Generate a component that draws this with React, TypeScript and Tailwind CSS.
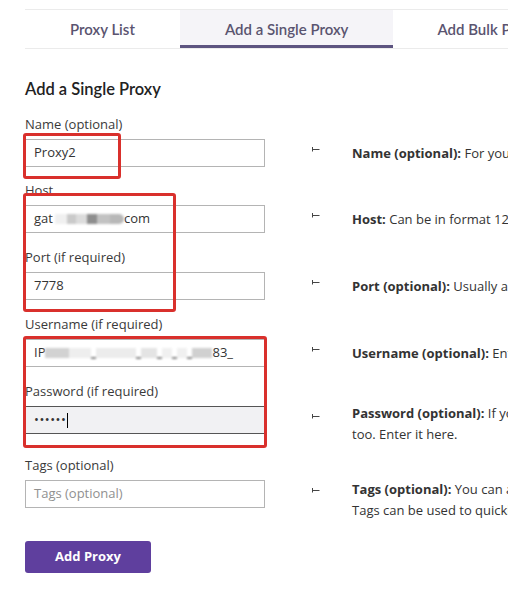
import React from "react";

const Arrow = () => (
  <svg width="9" height="6" viewBox="0 0 9 6" className="mb-[8px] shrink-0 text-[#444]">
    <path d="M1 3.5H8.5" stroke="currentColor" strokeWidth="1" fill="none" />
    <path d="M1.5 1L1.5 5.5" stroke="currentColor" strokeWidth="1" fill="none" />
  </svg>
);

function Help({ children, shift }: { children: React.ReactNode; shift?: "pw" | "tags" }) {
  const cls =
    shift === "pw" ? "translate-y-[4px]" : shift === "tags" ? "translate-y-[6px]" : "";
  return (
    <div className="ml-[46px] mt-[24px] flex h-[28px] items-center">
      <div className="w-[8px]">
        <Arrow />
      </div>
      <div className={"ml-[33px] whitespace-nowrap text-[13px] leading-[21px] text-[#333] " + cls}>
        {children}
      </div>
    </div>
  );
}

function Field({
  label,
  input,
  help,
  className,
}: {
  label: string;
  input: React.ReactNode;
  help: React.ReactNode;
  className?: string;
}) {
  return (
    <div className={"flex " + (className ?? "")}>
      <div className="flex w-[240px] shrink-0 flex-col">
        <div className="h-[18px] text-[13px] leading-[18px] text-[#3a3a3a]">{label}</div>
        <div className="mt-[6px]">{input}</div>
      </div>
      {help}
    </div>
  );
}

const baseInput =
  "flex h-[28px] w-[240px] items-center overflow-hidden whitespace-nowrap border border-[#b4b4b4] bg-white px-[8px] text-[13px] text-[#333]";

export default function App() {
  return (
    <div className="relative h-[596px] w-[508px] overflow-hidden bg-white font-['Open_Sans',sans-serif]">
      {/* Tabs */}
      <div className="ml-[25px] mt-[9px] flex h-[40px] w-[600px] border-y border-[#ebebeb] font-['Lato',sans-serif] text-[15px] font-semibold text-[#5a5470]">
        <div className="flex items-center px-[45px]">Proxy List</div>
        <div className="flex items-center border-b-[3px] border-[#5d5480] bg-[#f5f4f8] px-[45px] pt-[3px]">
          Add a Single Proxy
        </div>
        <div className="flex items-center px-[44px]">Add Bulk Proxies</div>
      </div>

      <div className="px-[25px]">
        <h2 className="mt-[29px] h-[22px] font-['Lato',sans-serif] text-[16.5px] font-semibold leading-[22px] text-[#222]">
          Add a Single Proxy
        </h2>

        <div className="mt-[15px]">
          <Field
            className="mb-[14px]"
            label="Name (optional)"
            input={<div className={baseInput}>Proxy2</div>}
            help={
              <Help>
                <b>Name (optional):</b> For your reference only
              </Help>
            }
          />
          <Field
            className="mb-[15px]"
            label="Host"
            input={
              <div className={baseInput}>
                <span>gat</span>
                <span className="ml-[2px] flex items-center blur-[1px]">
                  <span className="inline-block h-[10px] w-[12px] bg-[#f0f0f0]" />
                  <span className="inline-block h-[10px] w-[9px] bg-[#cacaca]" />
                  <span className="inline-block h-[10px] w-[11px] bg-[#dcdcdc]" />
                  <span className="inline-block h-[10px] w-[10px] bg-[#8e8e8e]" />
                  <span className="inline-block h-[10px] w-[13px] bg-[#c2c2c2]" />
                  <span className="inline-block h-[10px] w-[14px] rounded-r-full bg-[#b8b8b8]" />
                </span>
                <span>com</span>
              </div>
            }
            help={
              <Help>
                <b>Host:</b> Can be in format 123.123.123.123 or host.com
              </Help>
            }
          />
          <Field
            className="mb-[15px]"
            label="Port (if required)"
            input={<div className={baseInput}>7778</div>}
            help={
              <Help>
                <b>Port (optional):</b> Usually a number
              </Help>
            }
          />
          <Field
            className="mb-[15px]"
            label="Username (if required)"
            input={
              <div className={baseInput}>
                <span>IP</span>
                <span className="flex items-center blur-[0.8px]">
                  <span className="inline-block h-[10px] w-[24px] bg-[#d2d2d2]" />
                  <span className="inline-block h-[10px] w-[22px] bg-[#eeeeee]" />
                  <span className="inline-block h-[2px] w-[5px] translate-y-[5px] bg-[#888]" />
                  <span className="inline-block h-[10px] w-[40px] bg-[#ececec]" />
                  <span className="inline-block h-[2px] w-[5px] translate-y-[5px] bg-[#888]" />
                  <span className="inline-block h-[10px] w-[16px] bg-[#e4e4e4]" />
                  <span className="inline-block h-[2px] w-[5px] translate-y-[5px] bg-[#888]" />
                  <span className="inline-block h-[10px] w-[10px] bg-[#f0f0f0]" />
                  <span className="inline-block h-[2px] w-[5px] translate-y-[5px] bg-[#888]" />
                  <span className="inline-block h-[10px] w-[10px] bg-[#f0f0f0]" />
                  <span className="inline-block h-[2px] w-[5px] translate-y-[5px] bg-[#888]" />
                  <span className="inline-block h-[10px] w-[20px] bg-[#d0d0d0]" />
                </span>
                <span>83_</span>
              </div>
            }
            help={
              <Help>
                <b>Username (optional):</b> Enter your username
              </Help>
            }
          />
          <Field
            className="mb-[22px]"
            label="Password (if required)"
            input={
              <div className="flex h-[28px] w-[240px] items-center border border-[#555] bg-[#f1f1f3] px-[8px] text-[13px] text-[#333]">
                <span className="tracking-[0.5px]">••••••</span>
                <span className="ml-[1px] inline-block h-[15px] w-px bg-black" />
              </div>
            }
            help={
              <Help shift="pw">
                <b>Password (optional):</b> If your proxy requires a password
                <br />
                too. Enter it here.
              </Help>
            }
          />
          <Field
            label="Tags (optional)"
            input={<div className={baseInput + " text-[#909090]"}>Tags (optional)</div>}
            help={
              <Help shift="tags">
                <b>Tags (optional):</b> You can add tags to this proxy.
                <br />
                Tags can be used to quickly filter proxies.
              </Help>
            }
          />
        </div>

        <button className="mt-[33px] flex h-[32px] w-[126px] items-center justify-center rounded-[3px] bg-[#5f3f9e] text-[13px] font-bold text-white">
          Add Proxy
        </button>
      </div>

      {/* Red annotation boxes */}
      <div className="pointer-events-none absolute left-[23px] top-[133px] h-[46px] w-[98px] rounded-[3px] border-[3px] border-[#d9302c]" />
      <div className="pointer-events-none absolute left-[23px] top-[193px] h-[119px] w-[153px] rounded-[3px] border-[3px] border-[#d9302c]" />
      <div className="pointer-events-none absolute left-[23px] top-[336px] h-[112px] w-[244px] rounded-[3px] border-[3px] border-[#d9302c]" />
    </div>
  );
}
